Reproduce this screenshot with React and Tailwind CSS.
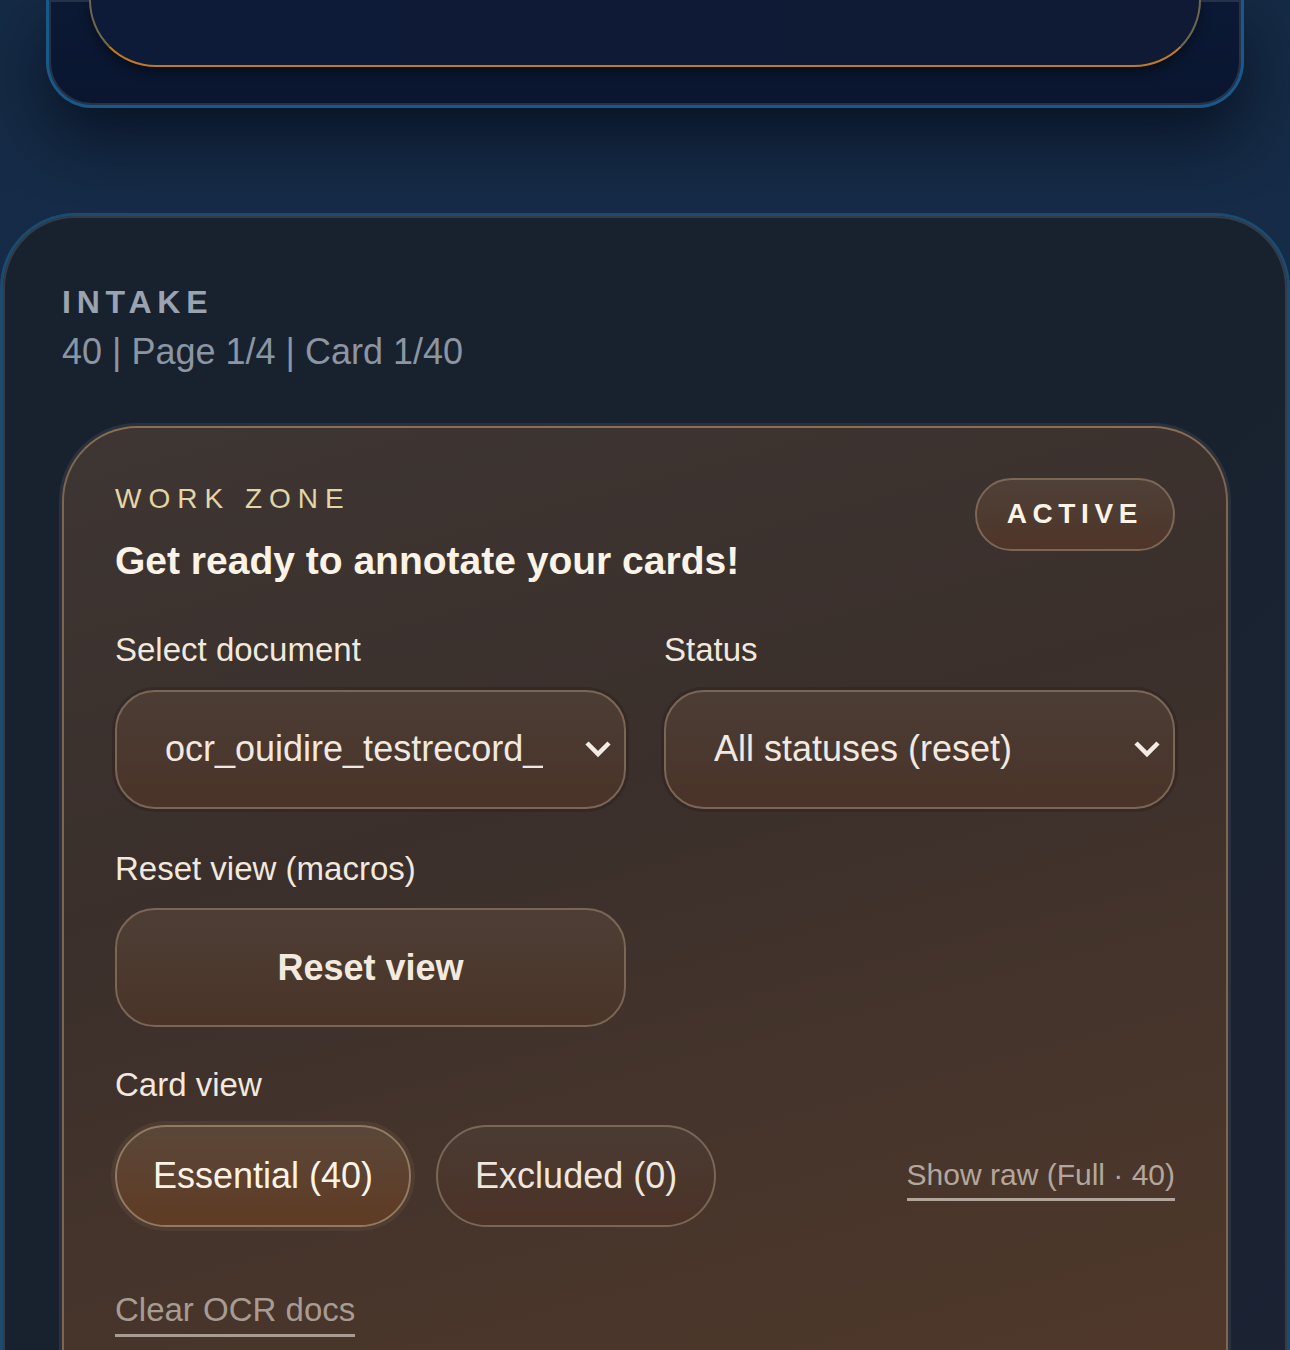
import { useState } from 'react'

function Chevron() {
	return (
		<svg width="28" height="18" viewBox="0 0 28 18" className="shrink-0">
			<polyline points="3,3 14,14 25,3" fill="none" stroke="#f3ece5" strokeWidth="4.5" strokeLinejoin="miter" />
		</svg>
	)
}

function Field({ label, children }) {
	return (
		<div className="flex flex-col gap-[20px]">
			<div className="text-[33px] leading-[1.2] text-[#f2e8de]">{label}</div>
			{children}
		</div>
	)
}

function SelectBox({ value }) {
	return (
		<div className="h-[119px] rounded-[40px] border-2 border-[#7b6656] bg-gradient-to-b from-[#4b3d35] to-[#4a3328] shadow-[0_0_0_3px_rgba(40,30,25,0.35)] flex items-center justify-between pl-[48px] pr-[12px]">
			<span className="text-[36px] text-[#f1e9e1] whitespace-nowrap overflow-hidden">{value}</span>
			<Chevron />
		</div>
	)
}

function App() {
	const [view, setView] = useState('essential')

	return (
		<div className="h-[1350px] w-full overflow-hidden bg-gradient-to-b from-[#152a45] via-[#172c49] to-[#1a2e4b] font-['Liberation_Sans',Arial,sans-serif]">
			{/* previous card (scrolled out) */}
			<div className="mx-[46px] h-[108px] rounded-b-[46px] border-[3px] border-t-0 border-[#1a5887] bg-gradient-to-b from-[#0c1934] to-[#0a1630] shadow-[inset_0_0_0_2px_#25324a,0_30px_60px_rgba(6,14,28,0.75)] px-[40px] pb-[38px]">
				<div className="h-full rounded-b-[72px] border-2 border-t-0 border-[#6c684e] border-b-[#c07a1f] bg-gradient-to-r from-[#0d1a38] to-[#101a34] shadow-[0_6px_10px_rgba(5,10,20,0.6)]" />
			</div>

			<div className="h-[105px]" />

			{/* Intake section */}
			<section className="rounded-t-[75px] border-[3px] border-b-0 border-[#1d4b70] bg-gradient-to-br from-[#18222f] via-[#18222f] to-[#1c2334] shadow-[inset_0_0_0_2px_#363c46] px-[59px] pt-[67px]">
				<div className="text-[32px] leading-[1.2] font-bold tracking-[0.18em] text-[#9aa3af]">INTAKE</div>
				<div className="mt-[9px] text-[36px] leading-[1.2] text-[#8c95a2]">40 | Page 1/4 | Card 1/40</div>

				{/* Work zone */}
				<div className="mt-[52px] rounded-t-[75px] border-2 border-b-0 border-[#7d6652] border-t-[#8a6f56] bg-[linear-gradient(165deg,#3e3633_0%,#3a2f2b_35%,#47352b_65%,#54392a_100%)] shadow-[0_0_0_3px_rgba(60,64,72,0.5)] px-[51px] pt-[50px] pb-[200px]">
					<div className="flex items-start justify-between">
						<div className="pt-[4px]">
							<div className="text-[28px] leading-[1.2] tracking-[0.25em] text-[#e4d5a6]">WORK ZONE</div>
							<h1 className="mt-[23px] text-[39px] leading-[1.2] font-bold text-[#fbf3e6]">Get ready to annotate your cards!</h1>
						</div>
						<div className="h-[73px] rounded-full border-2 border-[#7c6656] bg-gradient-to-b from-[#4f4038] to-[#4e3528] px-[30px] flex items-center text-[28px] font-bold tracking-[0.2em] text-[#fbf3e6]">
							ACTIVE
						</div>
					</div>

					<div className="mt-[45px] grid grid-cols-2 gap-x-[38px]">
						<Field label="Select document">
							<SelectBox value="ocr_ouidire_testrecord_" />
						</Field>
						<Field label="Status">
							<SelectBox value="All statuses (reset)" />
						</Field>
					</div>

					<div className="mt-[40px] grid grid-cols-2 gap-x-[38px]">
						<Field label="Reset view (macros)">
							<button className="h-[119px] rounded-[40px] border-2 border-[#7b6656] bg-gradient-to-b from-[#4d3e35] to-[#4a3428] text-[36px] font-bold text-[#f4e9df]">
								Reset view
							</button>
						</Field>
					</div>

					<div className="mt-[38px]">
						<Field label="Card view">
							<div className="flex items-center">
								<button
									onClick={() => setView('essential')}
									className={`h-[102px] rounded-full border-2 px-[36px] text-[36px] ${view === 'essential' ? 'border-[#917a62] bg-gradient-to-b from-[#5a4739] to-[#5f3b23] shadow-[0_0_0_4px_rgba(90,70,55,0.55)] text-[#fbf3e8]' : 'border-[#7b6656] bg-gradient-to-b from-[#4a3b33] to-[#4b3226] text-[#efe6dd]'}`}
								>
									Essential (40)
								</button>
								<button
									onClick={() => setView('excluded')}
									className={`ml-[25px] h-[102px] rounded-full border-2 px-[37px] text-[36px] ${view === 'excluded' ? 'border-[#917a62] bg-gradient-to-b from-[#5a4739] to-[#5f3b23] shadow-[0_0_0_4px_rgba(90,70,55,0.55)] text-[#fbf3e8]' : 'border-[#7b6656] bg-gradient-to-b from-[#4a3b33] to-[#4b3226] text-[#efe6dd]'}`}
								>
									Excluded (0)
								</button>
								<a className="ml-auto mt-[9px] inline-block pb-[8px] border-b-[3px] border-[#b2a69c] text-[30px] leading-none text-[#b3a79d] cursor-pointer">
									Show raw (Full · 40)
								</a>
							</div>
						</Field>
					</div>

					<div className="mt-[66px]">
						<a className="inline-block pb-[8px] border-b-[3px] border-[#a89b92] text-[33px] leading-none text-[#a89b92] cursor-pointer">
							Clear OCR docs
						</a>
					</div>
				</div>
			</section>
		</div>
	)
}

export default App
